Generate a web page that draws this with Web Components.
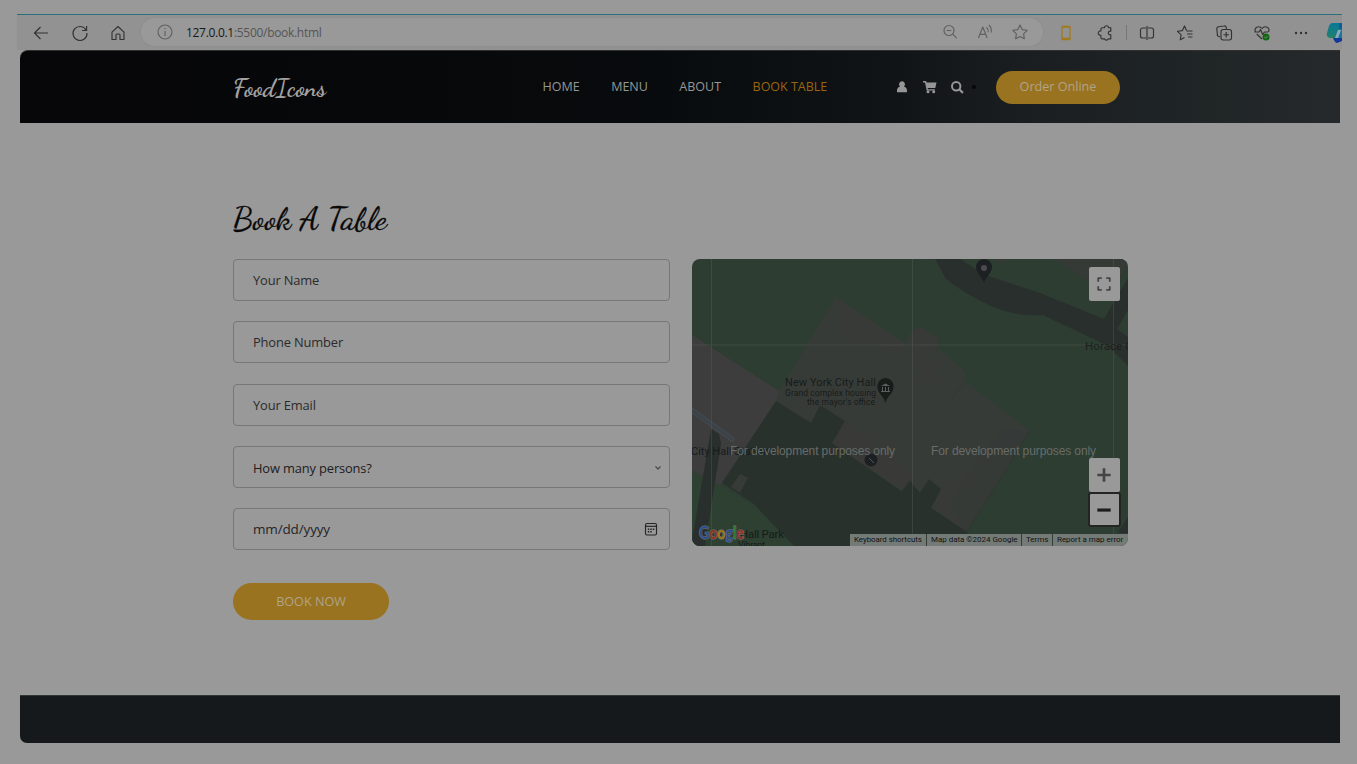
<!DOCTYPE html>
<html lang="en">
<head>
<meta charset="utf-8">
<title>FoodIcons</title>
<style>
html,body{margin:0;height:100%;background:#999;overflow:hidden}
body{font-family:"Open Sans","Noto Sans",sans-serif}
</style>
</head>
<body>
<food-page></food-page>
<script>
const define=(name,html)=>customElements.define(name,class extends HTMLElement{
  constructor(){super();this.attachShadow({mode:'open'}).innerHTML='<style>*{box-sizing:border-box}</style>'+html;}
});

const ICONS={
 back:'<path d="M16 9H2.500M8.500 3L2.500 9l6 6"/>',
 reload:'<path d="M15.200 6.200A7 7 0 1 0 16 9M15.600 2v4.500h-4.500"/>',
 home:'<path d="M3 8.200L9 2.500l6 5.700V15.500H11V11a1 1 0 0 0-1-1H8a1 1 0 0 0-1 1v4.500H3z"/>',
 info:'<circle cx="9" cy="9" r="7"/><path d="M9 8v5M9 5v1.300"/>',
 zoomout:'<circle cx="8" cy="7.500" r="5"/><path d="M11.700 11.200l4 4M5.700 7.500h4.600"/>',
 read:'<path d="M2.500 15L6.800 4l4.300 11M4 11.300h5.600M10.500 4.200q2 2 1.700 5M13 2q3 3.200 2.200 7.500"/>',
 star:'<path d="M9 2l2.200 4.600 5 .7-3.600 3.500.8 5L9 13.400l-4.400 2.400.8-5L1.800 7.300l5-.7z"/>',
 phone:'<path d="M5 2.500h8v13h-8zM4.500 3h9M4.500 14.500h9" stroke-width="1.300"/>',
 puzzle:'<path d="M6.200 3.700h2.300a2 2 0 0 1 4 0H14.800V7.200a1.900 1.900 0 1 0 0 3.600V14.800H12.300a2 2 0 0 1-3.800 0H6.200a1.300 1.300 0 0 1-1.300-1.300V11.200a2.200 2.200 0 1 1 0-4.300V5a1.300 1.300 0 0 1 1.300-1.300z"/>',
 split:'<path d="M8 4H4.500A2 2 0 0 0 2.500 6v6a2 2 0 0 0 2 2H8M10 4h3.500a2 2 0 0 1 2 2v6a2 2 0 0 1-2 2H10M9 2v14"/>',
 favs:'<path d="M10.500 6.500L8.500 2 6.400 6.600l-4.900.7 3.600 3.500-.8 5 4.200-2.300M10.500 7h6M11 10h5.500M12 13h4.500"/>',
 collections:'<path d="M5 13l-1.300-.5a2 2 0 0 1-1.300-2.500l-.6-5a2 2 0 0 1 1.700-2.200L9 2a2 2 0 0 1 2.300 1.600V5"/><rect x="6" y="5.500" width="10.500" height="10.500" rx="2.200"/><path d="M11.200 8v5.500M8.500 10.700H14"/>',
 health:'<path d="M2.500 8C.5 3.500 6 1 9 4.500 12 1 17.500 3.500 15.500 8M3.700 10L9 15M1.500 8H6l1.500-2.500 2.200 5L11.500 8H15"/><circle cx="13" cy="13" r="3.500" fill="#126512" stroke="none"/><path d="M11.300 13l1.200 1.200 2.200-2.400" stroke="#8a9a8a" stroke-width=".8"/>',
 more:'<g fill="currentColor" stroke="none"><circle cx="4" cy="9" r="1.200"/><circle cx="9" cy="9" r="1.200"/><circle cx="14" cy="9" r="1.200"/></g>',
 user:'<path fill="currentColor" stroke="none" d="M9 3.300a3 3 0 0 1 2 5.200c2.500.8 3.200 2.500 3 5.800H4c-.2-3.300.5-5 3-5.800a3 3 0 0 1 2-5.200z"/>',
 cart:'<path fill="currentColor" stroke="none" d="M2 3h3l.6 1.400H15.500L14.300 10H6.700l.2 1.300h7V12.500H5.700L4 4.500H2z"/><g fill="currentColor" stroke="none"><circle cx="7" cy="13.700" r="1.500"/><circle cx="12.700" cy="13.700" r="1.500"/></g>',
 search:'<circle cx="8.200" cy="8.200" r="4.200" stroke-width="2"/><path d="M11.300 11.300l3.600 3.600" stroke-width="2.200"/>',
 calendar:'<rect x="3.500" y="3.500" width="11" height="11.500" rx="1.500"/><path d="M3.500 6.300h11"/><path stroke-dasharray="1.500 1" d="M5.800 9.300h6.500M5.800 11.800h4" stroke-width="1.500"/>',
 chevron:'<path d="M6.500 7.300L9 10.200l2.500-2.900"/>',
 full:'<path d="M2.500 6.500v-4h4M11.500 2.500h4v4M15.500 11.500v4h-4M6.500 15.500h-4v-4" stroke-width="2"/>',
 plus:'<path d="M9 1.500v15M1.500 9h15" stroke-width="3"/>',
 minus:'<path d="M1.500 9h15" stroke-width="3.600"/>'
};
customElements.define('ui-icon',class extends HTMLElement{
  connectedCallback(){
    if(this.shadowRoot)return;
    this.attachShadow({mode:'open'}).innerHTML='<style>:host{display:block;width:18px;height:18px;flex:none}svg{display:block;width:100%;height:100%}</style><svg viewBox="0 0 18 18" fill="none" stroke="currentColor" stroke-width="1.15" stroke-linejoin="round">'+ICONS[this.getAttribute('name')]+'</svg>';
  }
});

define('browser-bar',`<style>
:host{display:grid;grid-template-columns:124px 902px 1fr;height:36px;background:#929292;color:#333;border-top:1px solid #287080;position:relative;overflow:hidden}
.gap{position:absolute;top:-1px;left:317px;width:221px;height:1px;background:#929292}
.nav{display:flex;align-items:center;padding-left:15px;gap:20.500px}
.addr{display:flex;align-items:center;background:#999;border-radius:14px;height:28px;margin-top:3px;padding:0 14px 0 15px;color:#606060;box-shadow:0 0 2px #888}
.url{font-size:12px;letter-spacing:-.3px;margin-left:12px;color:#555;flex:1;white-space:nowrap}.url b{font-weight:500;color:#171717}
.in{display:flex;gap:17px}
.tools{display:flex;align-items:center;padding-left:14px;gap:20.500px}
.sep{width:1px;height:15px;background:#777;margin:0 -10px 0 -8px;flex:none}
.copilot{width:18px;height:22px;margin-left:-4px;flex:none}
</style>
<i class="gap"></i>
<div class="nav"><ui-icon name="back"></ui-icon><ui-icon name="reload"></ui-icon><ui-icon name="home"></ui-icon></div>
<div class="addr"><ui-icon name="info"></ui-icon><span class="url"><b>127.0.0.1</b>:5500/book.html</span><div class="in"><ui-icon name="zoomout"></ui-icon><ui-icon name="read"></ui-icon><ui-icon name="star"></ui-icon></div></div>
<div class="tools"><ui-icon name="phone" style="color:#a07a1c"></ui-icon><ui-icon name="puzzle"></ui-icon><i class="sep"></i><ui-icon name="split"></ui-icon><ui-icon name="favs"></ui-icon><ui-icon name="collections"></ui-icon><ui-icon name="health"></ui-icon><ui-icon name="more"></ui-icon>
<svg class="copilot" viewBox="0 0 18 22"><defs><linearGradient id="c" x2="0" y2="1"><stop stop-color="#087999"/><stop offset="1" stop-color="#22806a"/></linearGradient></defs><path d="M6 1h12v10L10 16H4Q0 15 1 11l2-7q1-3 3-3z" fill="url(#c)"/><path d="M13 1h5v6h-5z" fill="#0a5d99"/><path d="M7 16h9v3l-5 2q-2 0-4-5z" fill="#12399a"/><path d="M11 7h7v9h-9z" fill="#1b75a0"/><path d="M12 8h3l-3 8H9z" fill="#8eacb2"/></svg></div>`);

define('site-header',`<style>
:host{display:flex;align-items:center;height:73px;padding-left:213px;color:#969696;font-size:12.500px;border-radius:8px 0 0 0;border-top:1px solid #303030;background:linear-gradient(90deg,#070709 0,#070809 30%,#080b0d 48%,#101416 66%,#1a1e21 76%,#202526 90%,#25292b 100%)}
.brand{width:309px;display:block;height:34px}
svg text{font-family:"Dancing Script",cursive;font-weight:bold;fill:#a2a2a2}
nav{display:flex;gap:31.500px;width:351px;white-space:nowrap;padding-left:.5px}.on{color:#99650f}
nav,.order{position:static;padding-bottom:1px}
.icons{display:flex;gap:9.500px;width:103px;align-items:center}.dot{width:4px;height:4px;border-radius:50%;background:#060606;margin-left:-4px}
.order{width:124px;height:33px;border-radius:17px;background:#99731f;display:grid;place-items:center;color:#b0a489;font-size:12.600px}
</style>
<div class="brand"><svg width="100" height="34"><text x="0" y="26" font-size="24" textLength="93" lengthAdjust="spacingAndGlyphs">FoodIcons</text></svg></div>
<nav><span>HOME</span><span>MENU</span><span>ABOUT</span><span class="on">BOOK TABLE</span></nav>
<div class="icons"><ui-icon name="user"></ui-icon><ui-icon name="cart"></ui-icon><ui-icon name="search"></ui-icon><i class="dot"></i></div>
<div class="order">Order Online</div>`);

define('form-field',`<style>
:host{display:flex;align-items:center;justify-content:space-between;height:42px;border:1px solid #777;border-radius:4px;padding:0 9px 0 19.500px;font-size:12.900px;letter-spacing:-.15px;color:#2b2b2b}
</style><slot></slot><slot name="icon"></slot>`);

define('booking-form',`<style>
:host{display:flex;flex-direction:column;width:437px}
.fields{display:grid;gap:20.300px;margin-left:-.5px}
.book{width:156px;height:37px;border-radius:19px;background:#99731f;display:grid;place-items:center;color:#b0a489;font-size:12.600px;margin-top:33px}
</style><div class="fields"><form-field>Your Name</form-field><form-field>Phone Number</form-field><form-field>Your Email</form-field>
<form-field style="color:#1c1c1c;padding-right:2px;padding-top:2px">How many persons?<ui-icon slot="icon" name="chevron" style="color:#444"></ui-icon></form-field>
<form-field style="font-size:13.500px;color:#252525">mm/dd/yyyy<ui-icon slot="icon" name="calendar"></ui-icon></form-field></div><div class="book">BOOK NOW</div>`);

define('city-map',`<style>
:host{display:block;position:relative;width:436px;height:287px;border-radius:8px;overflow:hidden;background:#2d3d32}
.art{display:block}
.art text{font-family:Roboto,sans-serif}
.ctl{position:absolute;right:8px;width:31px;height:34px;background:#999;border-radius:2px;display:grid;place-items:center;color:#444;padding-right:1px}
.ctl ui-icon{width:16px;height:16px}
.focus{outline:2px solid #242424;outline-offset:-1px;color:#1c1c1c}
.legal{position:absolute;right:0;bottom:0;height:12px;display:flex;background:#747b76;color:#111;font:8px/12px Roboto,sans-serif;letter-spacing:-.03px}
.legal span{padding:0 0 0 4px;border-right:1px solid #343d36;white-space:nowrap}
.legal span:last-child{border:0}
</style>
<svg class="art" width="436" height="287" viewBox="692 259 436 287">
<path fill="#3d3d3e" d="M692 335L779 391 782 410 776 401 722 483 720 486 692 470z"/>
<path fill="#373b38" d="M778 393L836 297 905 343 912 330 921 327 938 338V348L966 372 965 381 1030 431 967 532 931 508 917 494 908 491 811 423 776 401z"/>
<path fill="#3a3938" d="M912 334l9-7 17 11-1 10-9 2 6 28-15 6zM836 297l70 47-3 10-63-20z" opacity=".5"/>
<path fill="#3a3a38" d="M940 490l28-16 62-43-63 101-36-25z" opacity=".4"/>
<path fill="#343a37" d="M1004 429q-35 38-54 76l17 27 63-101z" opacity=".5"/>
<path fill="none" stroke="#313632" opacity=".7" d="M938 348l-3 6M965 382l-14 17M1030 431l-63 101"/>
<path fill="#29312d" d="M776 401L811 423 820 405 848 423 832 443 901 491 908 478 920 493 929 479 941 489 931 508 967 532 976 546H793L754 504 722 483z"/>
<path fill="#393938" d="M845 421l-13 22 70 48 11-15z"/>
<path fill="#363b38" d="M740 474l8 4-8 15-9-6z"/>
<path fill="#2d4032" d="M692 470q17 12 31 17l31 18 40 41H692z"/>
<path fill="#292f2c" d="M711 429l8 5 2 10-16 102h-14z"/>
<path fill="none" stroke="#454b50" stroke-width="5" stroke-linecap="round" d="M690 409l42 30"/><path fill="none" stroke="#3b4248" stroke-width="3" stroke-linecap="round" d="M690 409l42 30"/>
<path fill="#292f2d" d="M935 259h25l25 16 55 18 64 26 24-41v32l-11 19 11 8v29l-20-20-65-31q-26 2-50-8-30-14-47-28z"/>
<path fill="#353a36" d="M995 259h13l-5 6zM1054 259h74v4l-13 26-27-7z"/>
<path fill="#292f2c" d="M1128 517l-10 16h10z"/>
<path fill="none" stroke="#59625a" opacity=".38" d="M711.500 259v287M912.500 259v287M1113.500 259v287M692 345h436"/>
<g fill="#1d2022"><path d="M984 259a8 8 0 0 1 8 8c0 6-6 9-8 16-2-7-8-10-8-16a8 8 0 0 1 8-8z"/><circle cx="984" cy="268" r="3" fill="#4b4b4b"/>
<path d="M885.500 378a8 8 0 0 1 8 9c0 7-6 8-8 16-2-8-8-9-8-16a8 8 0 0 1 8-9z" fill="#181c1b"/><path fill="#59605c" d="M881 386l4.500-2.500L890 386zM882 387h1v4h-1zm3 0h1v4h-1zm3 0h1v4h-1zM881 391h9v1h-9z"/>
<circle cx="871" cy="460" r="6.500"/><path d="M869 458l5 5" stroke="#555"/></g>
<g fill="#171b19"><text x="785" y="386" font-size="11" textLength="91">New York City Hall</text><text x="785" y="396" font-size="8.500" textLength="91">Grand complex housing</text><text x="807" y="405" font-size="8.500" textLength="68">the mayor's office</text>
<text x="1085" y="350" font-size="11.500" fill="#1c1f1d" textLength="48">Horace G</text><text x="691" y="455" font-size="11" textLength="78">City Hall Station</text><text x="719" y="538" font-size="11.500" textLength="65">City Hall Park</text><text x="738" y="548" font-size="9" textLength="27">Vibrant</text></g>
<g fill="#686c69"><text x="730" y="455" style="font-family:'Liberation Sans',sans-serif" font-size="12" textLength="165">For development purposes only</text><text x="931" y="455" style="font-family:'Liberation Sans',sans-serif" font-size="12" textLength="165">For development purposes only</text></g>
<text x="699" y="539" style="font-family:Lato,sans-serif;font-weight:bold;paint-order:stroke" font-size="16.500" textLength="45" lengthAdjust="spacingAndGlyphs" stroke="#777" stroke-width="1.100"><tspan fill="#294f91">G</tspan><tspan fill="#913025">o</tspan><tspan fill="#987617">o</tspan><tspan fill="#294f91">g</tspan><tspan fill="#247b3b">l</tspan><tspan fill="#913025">e</tspan></text>
</svg>
<div class="ctl" style="top:8px"><ui-icon name="full"></ui-icon></div>
<div class="ctl" style="top:199px"><ui-icon name="plus"></ui-icon></div>
<div class="ctl focus" style="top:234px;height:33px"><ui-icon name="minus"></ui-icon></div>
<div class="legal"><span style="width:77px;font-size:7.900px">Keyboard shortcuts</span><span style="width:95px">Map data ©2024 Google</span><span style="width:31px">Terms</span><span style="width:75px">Report a map error</span></div>`);

define('food-page',`<style>
:host{display:block;padding:14px 15px 0 17px;height:764px;box-sizing:border-box}
.view{margin:0 2px 0 3px;height:693px;display:flex;flex-direction:column}
main{height:572px;padding:74px 0 0 213px}
.title{display:block;height:62px}
.title text{font-family:"Dancing Script",cursive;fill:#080808;stroke:#080808;stroke-width:.3px}
.cols{display:flex;gap:22px;align-items:flex-start}
footer{height:48px;background:#15191c;border-radius:0 0 0 7px;border-top:1px solid #303631}
</style>
<browser-bar></browser-bar>
<div class="view"><site-header></site-header>
<main><svg class="title" width="170" height="62"><text x="0" y="32" font-size="32" textLength="154" lengthAdjust="spacingAndGlyphs">Book A Table</text></svg>
<div class="cols"><booking-form></booking-form><city-map></city-map></div></main><footer></footer></div>`);
</script>
</body>
</html>
